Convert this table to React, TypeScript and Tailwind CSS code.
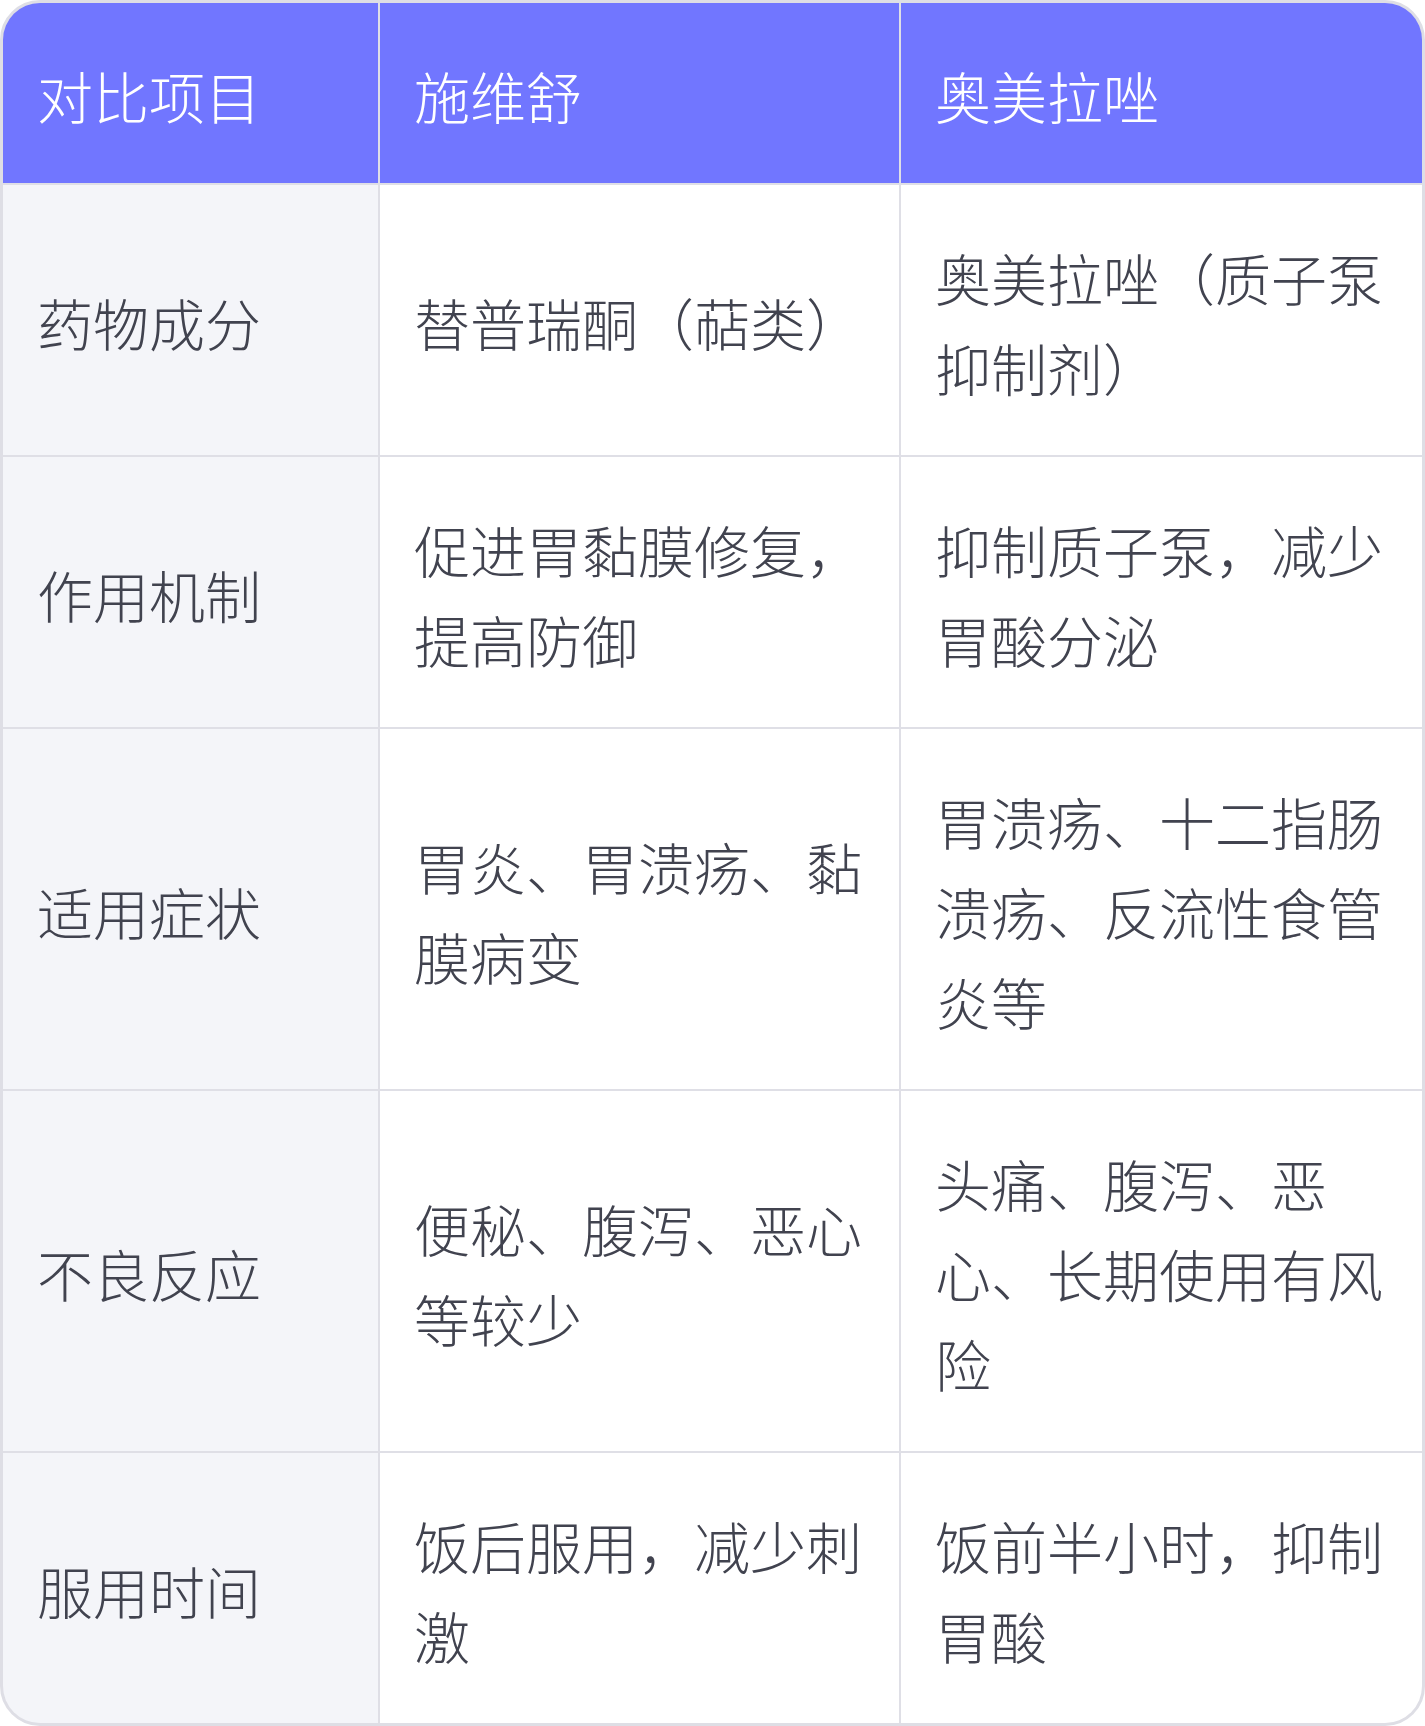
import React from 'react'

const headers = ['对比项目', '施维舒', '奥美拉唑']

const rows = [
  ['药物成分', '替普瑞酮（萜类）', '奥美拉唑（质子泵抑制剂）'],
  ['作用机制', '促进胃黏膜修复，提高防御', '抑制质子泵，减少胃酸分泌'],
  ['适用症状', '胃炎、胃溃疡、黏膜病变', '胃溃疡、十二指肠溃疡、反流性食管炎等'],
  ['不良反应', '便秘、腹泻、恶心等较少', '头痛、腹泻、恶心、长期使用有风险'],
  ['服用时间', '饭后服用，减少刺激', '饭前半小时，抑制胃酸'],
]

export default function App() {
  return (
    <div
      className="w-[1425px] h-[1726px] overflow-hidden rounded-[40px] border-[3px] border-[#dedee5] bg-[#dfdfe6]"
      style={{ fontFamily: '"Noto Sans CJK SC", "Noto Sans", sans-serif' }}
    >
      <div className="grid grid-cols-[375px_519px_1fr] gap-[2px] text-[56px] font-light leading-[90px] text-[#41434f]">
        {headers.map((h) => (
          <div key={h} className="flex items-center bg-[#7176ff] pl-[34px] pr-[30px] pt-[47px] pb-[43px] text-white">
            {h}
          </div>
        ))}
        {rows.map((row) =>
          row.map((cell, i) => (
            <div
              key={row[0] + i}
              className={
                i === 0
                  ? 'flex items-center bg-[#f4f5f9] pl-[34px] pr-[30px] pt-[47px] pb-[43px]'
                  : 'flex items-center bg-white pl-[34px] pr-[30px] pt-[47px] pb-[43px]'
              }
            >
              <span className="block w-full break-all">{cell}</span>
            </div>
          )),
        )}
      </div>
    </div>
  )
}
